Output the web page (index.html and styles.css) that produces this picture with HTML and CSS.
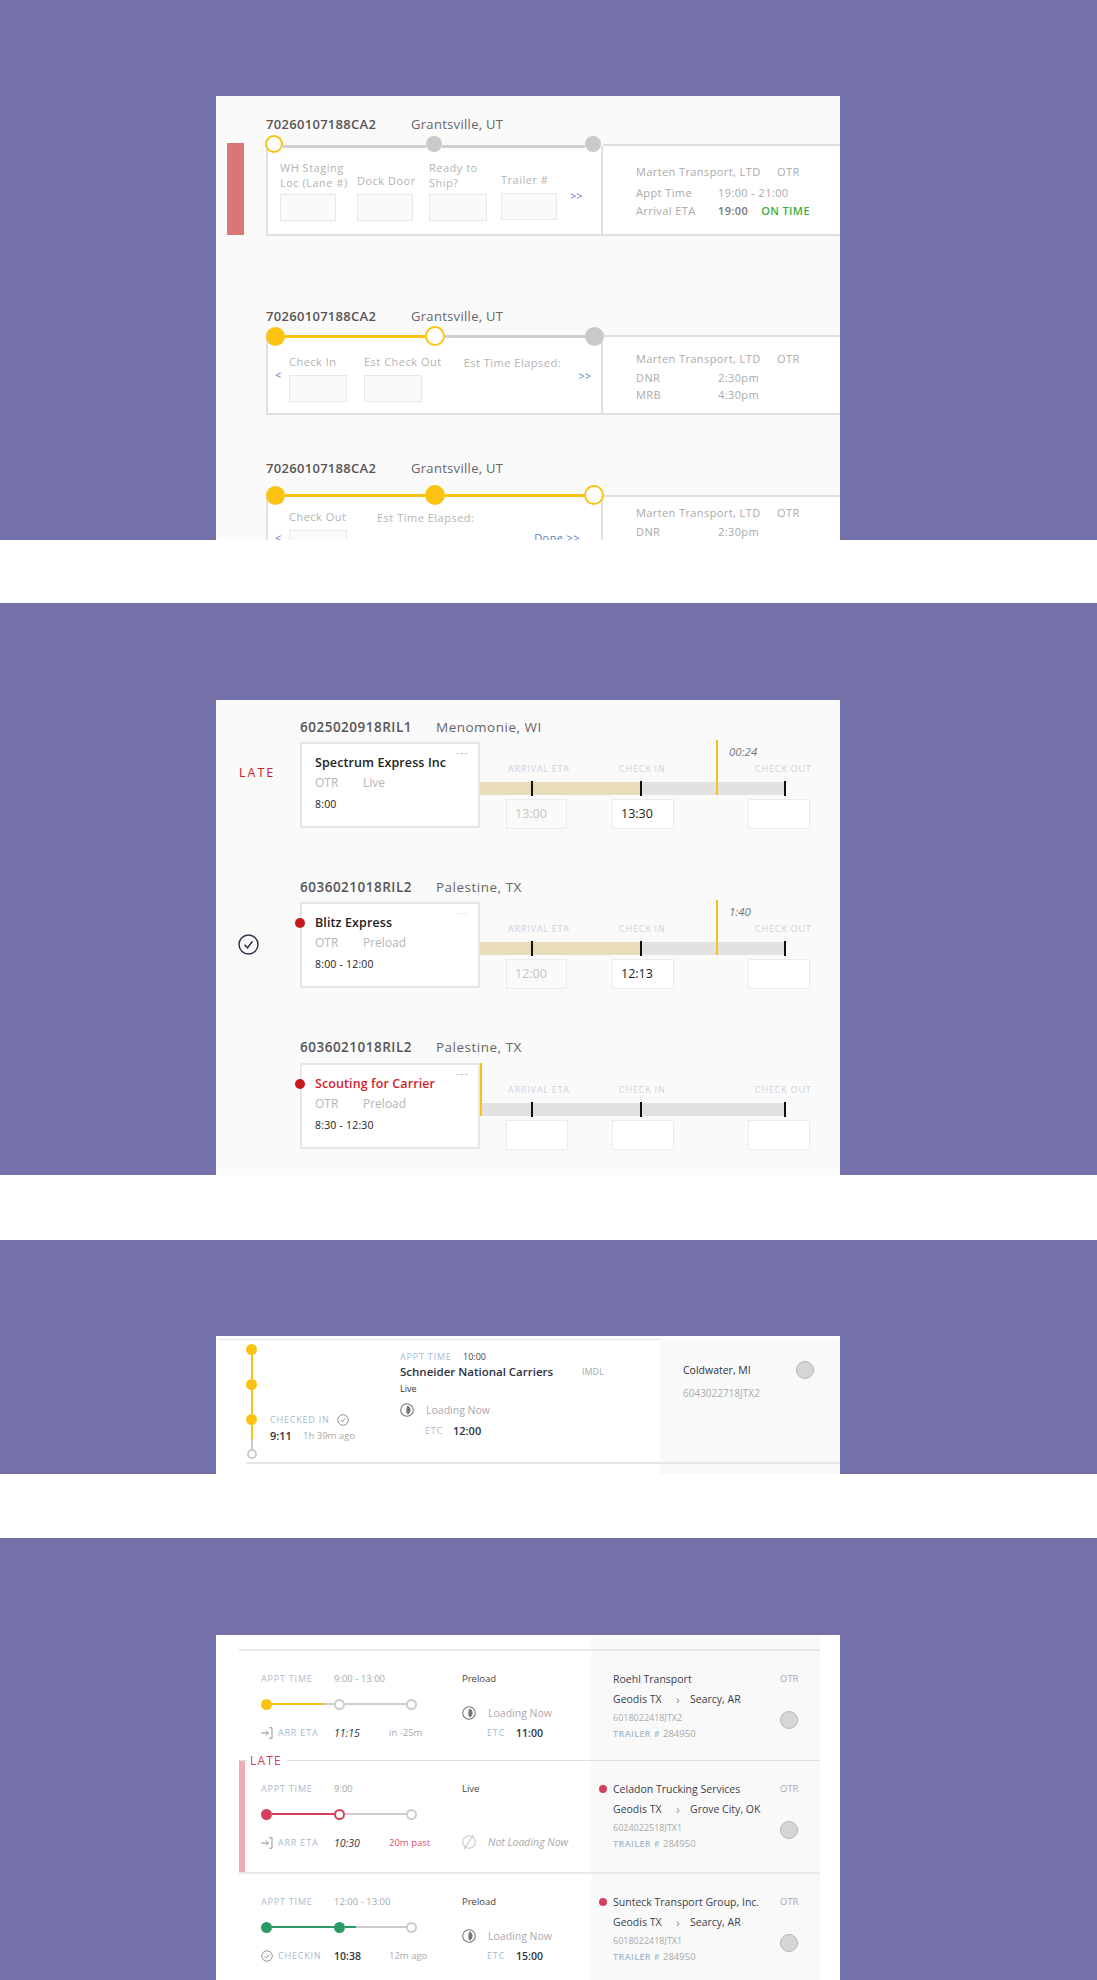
FILE: index.html
```html
<!DOCTYPE html>
<html lang="en">
<head>
    <meta charset="UTF-8">
    <title>Load tracking cards</title>
    <link rel="stylesheet" href="styles.css">
</head>
<body>

    <!-- stepper cards -->
    <section class="band band-1">
        <div class="panel panel-ship">
            <span class="late-block"></span>

            <div class="ship-head"><b>70260107188CA2</b><span>Grantsville, UT</span></div>
            <div class="ship-row">
                <div class="ship-left">
                    <div class="stepper stepper-1">
                        <i class="dot hollow"></i><i class="seg"></i><i class="dot grey small"></i><i class="seg"></i><i class="dot grey small"></i>
                    </div>
                    <div class="box box-1">
                        <div class="field field-wh"><div class="label">WH Staging<br>Loc (Lane #)</div><div class="input"></div></div>
                        <div class="field field-dock"><div class="label single">Dock Door</div><div class="input"></div></div>
                        <div class="field field-ready"><div class="label">Ready to<br>Ship?</div><div class="input wide"></div></div>
                        <div class="field field-trailer"><div class="label single">Trailer #</div><div class="input lift"></div></div>
                        <div class="next next-1">&gt;&gt;</div>
                    </div>
                </div>
                <div class="ship-right right-1">
                    <div class="carrier"><span>Marten Transport, LTD</span><span>OTR</span></div>
                    <div class="kv kv-first"><span>Appt Time</span><span>19:00 - 21:00</span></div>
                    <div class="kv"><span>Arrival ETA</span><span class="dark">19:00</span><span class="ontime">ON TIME</span></div>
                </div>
            </div>

            <div class="ship-head ship-head-2"><b>70260107188CA2</b><span>Grantsville, UT</span></div>
            <div class="ship-row">
                <div class="ship-left">
                    <div class="stepper stepper-2">
                        <i class="dot yellow"></i><i class="seg yellow"></i><i class="dot hollow big"></i><i class="seg"></i><i class="dot grey"></i>
                    </div>
                    <div class="box box-2">
                        <div class="prev prev-2">&lt;</div>
                        <div class="field"><div class="label single">Check In</div><div class="input wide"></div></div>
                        <div class="field field-gap"><div class="label single">Est Check Out</div><div class="input wide"></div></div>
                        <div class="label elapsed elapsed-2">Est Time Elapsed:</div>
                        <div class="next next-2">&gt;&gt;</div>
                    </div>
                </div>
                <div class="ship-right right-2">
                    <div class="carrier"><span>Marten Transport, LTD</span><span>OTR</span></div>
                    <div class="kv kv-near"><span>DNR</span><span>2:30pm</span></div>
                    <div class="kv kv-tight"><span>MRB</span><span>4:30pm</span></div>
                </div>
            </div>

            <div class="ship-head ship-head-3"><b>70260107188CA2</b><span>Grantsville, UT</span></div>
            <div class="ship-row">
                <div class="ship-left">
                    <div class="stepper stepper-3">
                        <i class="dot yellow"></i><i class="seg yellow"></i><i class="dot yellow big"></i><i class="seg yellow"></i><i class="dot hollow big"></i>
                    </div>
                    <div class="box box-3">
                        <div class="prev prev-3">&lt;</div>
                        <div class="field"><div class="label single">Check Out</div><div class="input wide"></div></div>
                        <div class="label elapsed elapsed-3">Est Time Elapsed:</div>
                        <div class="next done">Done &gt;&gt;</div>
                    </div>
                </div>
                <div class="ship-right right-3">
                    <div class="carrier"><span>Marten Transport, LTD</span><span>OTR</span></div>
                    <div class="kv kv-near"><span>DNR</span><span>2:30pm</span></div>
                </div>
            </div>
        </div>
    </section>

    <!-- timeline cards -->
    <section class="band band-2">
        <div class="panel panel-load">

            <div class="load-head"><b>6025020918RIL1</b><span>Menomonie, WI</span></div>
            <div class="load-row">
                <div class="flag"><span class="flag-late">LATE</span></div>
                <div class="load-card">
                    <span class="more">---</span>
                    <div class="load-name">Spectrum Express Inc</div>
                    <div class="load-meta"><span>OTR</span><span>Live</span></div>
                    <div class="load-time">8:00</div>
                </div>
                <div class="timeline">
                    <span class="marker"></span><span class="marker-time">00:24</span>
                    <div class="tl-labels"><span>ARRIVAL ETA</span><span>CHECK IN</span><span>CHECK OUT</span></div>
                    <div class="track"><span class="fill"></span><i class="tick t1"></i><i class="tick t2"></i><i class="tick t3"></i></div>
                    <div class="tl-inputs"><div class="time faded">13:00</div><div class="time">13:30</div><div class="time"></div></div>
                </div>
            </div>

            <div class="load-head"><b>6036021018RIL2</b><span>Palestine, TX</span></div>
            <div class="load-row">
                <div class="flag flag-done">
                    <svg width="21" height="21" viewBox="0 0 21 21" fill="none" stroke="#2f3448" stroke-width="1.5"><circle cx="10.5" cy="10.5" r="9.5"/><path d="M6.5 10.8l3 3 5-6.5"/></svg>
                </div>
                <div class="load-card">
                    <i class="alert"></i>
                    <span class="more pale">---</span>
                    <div class="load-name">Blitz Express</div>
                    <div class="load-meta"><span>OTR</span><span>Preload</span></div>
                    <div class="load-time">8:00 - 12:00</div>
                </div>
                <div class="timeline">
                    <span class="marker"></span><span class="marker-time">1:40</span>
                    <div class="tl-labels"><span>ARRIVAL ETA</span><span>CHECK IN</span><span>CHECK OUT</span></div>
                    <div class="track"><span class="fill"></span><i class="tick t1"></i><i class="tick t2"></i><i class="tick t3"></i></div>
                    <div class="tl-inputs"><div class="time faded">12:00</div><div class="time">12:13</div><div class="time"></div></div>
                </div>
            </div>

            <div class="load-head load-head-last"><b>6036021018RIL2</b><span>Palestine, TX</span></div>
            <div class="load-row">
                <div class="flag"></div>
                <div class="load-card">
                    <i class="alert"></i>
                    <span class="more">---</span>
                    <div class="load-name red">Scouting for Carrier</div>
                    <div class="load-meta"><span>OTR</span><span>Preload</span></div>
                    <div class="load-time">8:30 - 12:30</div>
                </div>
                <div class="timeline">
                    <span class="marker marker-start"></span>
                    <div class="tl-labels"><span>ARRIVAL ETA</span><span>CHECK IN</span><span>CHECK OUT</span></div>
                    <div class="track"><i class="tick t1"></i><i class="tick t2"></i><i class="tick t3"></i></div>
                    <div class="tl-inputs"><div class="time"></div><div class="time"></div><div class="time"></div></div>
                </div>
            </div>
        </div>
    </section>

    <!-- single checked in row -->
    <section class="band band-3">
        <div class="panel panel-checkin">
            <div class="checkin">
                <div class="checkin-left">
                    <div class="v-steps">
                        <i class="v-dot"></i><i class="v-seg"></i><i class="v-dot"></i><i class="v-seg"></i><i class="v-dot"></i><i class="v-seg v-seg-last"></i><i class="v-dot open"></i>
                    </div>
                    <div class="checked">
                        <div class="caps checked-title">CHECKED IN
                            <svg width="12" height="12" viewBox="0 0 12 12" fill="none" stroke="#888" stroke-width=".9"><circle cx="6" cy="6" r="5.3"/><path d="M3.6 6.2l1.7 1.7 3-3.6"/></svg>
                        </div>
                        <div class="checked-time"><b>9:11</b><span>1h 39m ago</span></div>
                    </div>
                    <div class="checkin-info">
                        <div class="appt-line"><span class="caps">APPT TIME</span><span class="appt-value">10:00</span></div>
                        <div class="carrier-line"><span class="carrier-name">Schneider National Carriers</span><span class="mode">IMDL</span></div>
                        <div class="live">Live</div>
                        <div class="loading">
                            <svg class="pie" width="14" height="16" viewBox="0 0 14 16" fill="none" stroke="#777" stroke-width="1.1"><circle cx="7" cy="8" r="6.3"/><path d="M7.500 3.400c2.400.8 3.500 3 3 5.600-.4 1.700-1.400 2.900-2.700 3.500-1.300-1.300-1.800-3-1.500-5 .2-1.600.5-3 1.200-4.100z" fill="#777" stroke="none"/></svg>
                            <span>Loading Now</span>
                        </div>
                        <div class="etc"><span class="caps">ETC</span><b>12:00</b></div>
                    </div>
                </div>
                <div class="checkin-right">
                    <div class="place">
                        <div class="place-name">Coldwater, MI</div>
                        <div class="place-id">6043022718JTX2</div>
                    </div>
                    <i class="status"></i>
                </div>
            </div>
            <div class="checkin-foot"></div>
        </div>
    </section>

    <!-- appointment list -->
    <section class="band band-4">
        <div class="panel panel-appt">
            <div class="appt-list">
                <div class="appt-top"></div>

                <div class="appt">
                    <div class="appt-main">
                        <div class="appt-track">
                            <div class="appt-time"><span class="caps">APPT TIME</span><span>9:00 - 13:00</span></div>
                            <div class="mini"><i class="m-dot m-yellow"></i><i class="m-seg"><span class="m-fill m-yellow part-long"></span></i><i class="m-dot m-open"></i><i class="m-seg"></i><i class="m-dot m-open"></i></div>
                            <div class="appt-eta">
                                <svg width="12" height="12" viewBox="0 0 12 12" fill="none" stroke="#888" stroke-width=".9"><path d="M0 6h7M4.800 3.400L7.400 6 4.800 8.600M8 .8h3v10.400H8"/></svg>
                                <span class="caps eta-label">ARR ETA</span><em>11:15</em><span class="eta-note">in -25m</span>
                            </div>
                        </div>
                        <div class="appt-load">
                            <div class="appt-kind">Preload</div>
                            <div class="loading loading-appt">
                                <svg class="pie" width="14" height="16" viewBox="0 0 14 16" fill="none" stroke="#777" stroke-width="1.1"><circle cx="7" cy="8" r="6.3"/><path d="M7.500 3.400c2.400.8 3.500 3 3 5.600-.4 1.700-1.400 2.900-2.700 3.500-1.300-1.300-1.800-3-1.500-5 .2-1.600.5-3 1.200-4.100z" fill="#777" stroke="none"/></svg>
                                <span>Loading Now</span>
                            </div>
                            <div class="etc etc-appt"><span class="caps">ETC</span><b>11:00</b></div>
                        </div>
                    </div>
                    <div class="appt-side">
                        <div class="side-text">
                            <div class="side-name">Roehl Transport</div>
                            <div class="route"><span>Geodis TX</span><span class="chev">&#8250;</span><span>Searcy, AR</span></div>
                            <div class="side-id">6018022418JTX2</div>
                            <div class="trailer"><span class="caps">TRAILER #</span><span>284950</span></div>
                        </div>
                        <div class="side-end"><span>OTR</span><i class="status"></i></div>
                    </div>
                </div>

                <div class="appt appt-late">
                    <span class="late-bar"></span>
                    <span class="late-tag">LATE</span>
                    <div class="appt-main">
                        <div class="appt-track">
                            <div class="appt-time"><span class="caps">APPT TIME</span><span>9:00</span></div>
                            <div class="mini"><i class="m-dot m-red"></i><i class="m-seg"><span class="m-fill m-red"></span></i><i class="m-dot m-open m-open-red"></i><i class="m-seg"></i><i class="m-dot m-open"></i></div>
                            <div class="appt-eta">
                                <svg width="12" height="12" viewBox="0 0 12 12" fill="none" stroke="#888" stroke-width=".9"><path d="M0 6h7M4.800 3.400L7.400 6 4.800 8.600M8 .8h3v10.400H8"/></svg>
                                <span class="caps eta-label">ARR ETA</span><em>10:30</em><span class="eta-note red-note">20m past</span>
                            </div>
                        </div>
                        <div class="appt-load">
                            <div class="appt-kind">Live</div>
                            <div class="loading loading-none">
                                <svg class="pie" width="14" height="16" viewBox="0 0 14 16" fill="none" stroke="#c8c8c8" stroke-width="1.1"><circle cx="7" cy="8" r="6.300"/><path d="M11.500 .8L2 15.400"/></svg>
                                <em>Not Loading Now</em>
                            </div>
                        </div>
                    </div>
                    <div class="appt-side">
                        <div class="side-text">
                            <div class="side-name"><i class="side-dot"></i>Celadon Trucking Services</div>
                            <div class="route"><span>Geodis TX</span><span class="chev">&#8250;</span><span>Grove City, OK</span></div>
                            <div class="side-id">6024022518JTX1</div>
                            <div class="trailer"><span class="caps">TRAILER #</span><span>284950</span></div>
                        </div>
                        <div class="side-end"><span>OTR</span><i class="status"></i></div>
                    </div>
                </div>

                <div class="appt appt-next">
                    <div class="appt-main">
                        <div class="appt-track">
                            <div class="appt-time"><span class="caps">APPT TIME</span><span>12:00 - 13:00</span></div>
                            <div class="mini"><i class="m-dot m-green"></i><i class="m-seg"><span class="m-fill m-green"></span></i><i class="m-dot m-green"></i><i class="m-seg"><span class="m-fill m-green part-short"></span></i><i class="m-dot m-open"></i></div>
                            <div class="appt-eta">
                                <svg width="12" height="12" viewBox="0 0 12 12" fill="none" stroke="#888" stroke-width=".9"><circle cx="6" cy="6" r="5.300"/><path d="M3.600 6.200l1.700 1.700 3-3.600"/></svg>
                                <span class="caps eta-label">CHECKIN</span><b>10:38</b><span class="eta-note">12m ago</span>
                            </div>
                        </div>
                        <div class="appt-load">
                            <div class="appt-kind">Preload</div>
                            <div class="loading loading-appt">
                                <svg class="pie" width="14" height="16" viewBox="0 0 14 16" fill="none" stroke="#777" stroke-width="1.1"><circle cx="7" cy="8" r="6.3"/><path d="M7.500 3.400c2.400.8 3.500 3 3 5.600-.4 1.700-1.400 2.900-2.700 3.500-1.300-1.300-1.800-3-1.500-5 .2-1.600.5-3 1.200-4.100z" fill="#777" stroke="none"/></svg>
                                <span>Loading Now</span>
                            </div>
                            <div class="etc etc-appt"><span class="caps">ETC</span><b>15:00</b></div>
                        </div>
                    </div>
                    <div class="appt-side">
                        <div class="side-text">
                            <div class="side-name"><i class="side-dot"></i>Sunteck Transport Group, Inc.</div>
                            <div class="route"><span>Geodis TX</span><span class="chev">&#8250;</span><span>Searcy, AR</span></div>
                            <div class="side-id">6018022418JTX1</div>
                            <div class="trailer"><span class="caps">TRAILER #</span><span>284950</span></div>
                        </div>
                        <div class="side-end"><span>OTR</span><i class="status"></i></div>
                    </div>
                </div>
            </div>
        </div>
    </section>

</body>
</html>
```

FILE: styles.css
```css
* {
    box-sizing: border-box;
}
body {
    margin: 0;
    background: #fff;
    font-family: "Open Sans", "Liberation Sans", sans-serif;
    font-size: 11px;
    color: #555;
}
i, em {
    display: block;
}
em {
    font-style: italic;
}

/* purple bands */
.band {
    background: #7470aa;
    padding-left: 216px;
}
.band-1 {
    height: 540px;
    padding-top: 96px;
    margin-bottom: 63px;
}
.band-2 {
    height: 572px;
    padding-top: 97px;
    margin-bottom: 65px;
}
.band-3 {
    height: 234px;
    padding-top: 96px;
    margin-bottom: 64px;
}
.band-4 {
    height: 442px;
    padding-top: 97px;
}
.panel {
    position: relative;
    width: 624px;
    height: 100%;
    overflow: hidden;
    background: #fafafa;
}

/* ---------- panel 1 ---------- */
.panel-ship { padding-top: 19px; }
.late-block {
    position: absolute;
    left: 11px;
    top: 47px;
    width: 17px;
    height: 92px;
    background: #d97777;
}
.ship-head {
    display: flex;
    height: 18px;
    margin-left: 50px;
    font-size: 13px;
    line-height: 18px;
    letter-spacing: .3px;
    color: #666;
}
.ship-head b {
    width: 145px;
    font-weight: 600;
    color: #555;
}
.ship-head-2 { margin-top: 71px; }
.ship-head-3 { margin-top: 44px; }
.ship-row {
    display: flex;
    margin-left: 50px;
}
.ship-left {
    width: 337px;
    flex: none;
}
.stepper {
    position: relative;
    z-index: 1;
    display: flex;
    align-items: center;
}
.stepper-1 { margin: 2px 2px 0 -1px; height: 18px; }
.stepper-2 { margin: 1px -1px 0 0; height: 20px; }
.stepper-3 { margin: 7px -1px 0 0; height: 22px; }
.dot {
    flex: none;
    width: 19px;
    height: 19px;
    border-radius: 50%;
}
.dot.big { width: 20px; height: 20px; }
.dot.small { width: 16px; height: 16px; }
.dot.hollow {
    background: #fff;
    border: 2px solid #fac312;
}
.stepper-1 .dot.hollow { width: 18px; height: 18px; }
.dot.yellow { background: #fac312; }
.dot.grey { background: #c9c9c9; }
.seg {
    flex: 1;
    height: 3px;
    background: #cfcfcf;
}
.stepper-1 .seg { position: relative; top: 2px; }
.seg.yellow { background: #fac312; }
.box {
    display: flex;
    background: #fff;
    border: 2px solid #e0e0e0;
    border-top: 0;
}
.box-1 {
    height: 90px;
    margin-top: -7px;
    align-items: flex-end;
    padding: 0 0 13px 12px;
}
.box-2 {
    height: 79px;
    margin-top: -10px;
    align-items: flex-start;
    padding: 18px 10px 0 7px;
}
.box-3 {
    height: 120px;
    margin-top: -11px;
    align-items: flex-start;
    padding: 14px 10px 0 7px;
}
.field-wh { width: 77px; }
.field-dock { width: 72px; }
.field-ready { width: 72px; }
.field-trailer { width: 69px; }
.field-gap { margin-left: 17px; }
.label {
    font-size: 11px;
    line-height: 15px;
    letter-spacing: .5px;
    color: #b3b3b3;
    white-space: nowrap;
    margin-bottom: 4px;
}
.label.single {
    margin-bottom: 6px;
}
.input {
    width: 56px;
    height: 27px;
    background: #fafafa;
    border: 1px solid #e8e8e8;
}
.input.wide { width: 58px; }
.input.lift { margin-bottom: 1px; }
.next, .prev {
    font-size: 11px;
    line-height: 14px;
    color: #5d7cc0;
}
.next-1 { margin: 0 0 18px 0; }
.next-2 { margin: 15px 0 0 auto; }
.done { margin: 22px 11px 0 auto; letter-spacing: .4px; white-space: nowrap; }
.prev { width: 14px; flex: none; }
.prev-2 { margin-top: 14px; }
.prev-3 { margin-top: 22px; }
.elapsed { margin-top: 1px; }
.elapsed-2 { margin-left: 22px; }
.elapsed-3 { margin-left: 30px; }
.ship-right {
    flex: 1;
    background: #fff;
    border-top: 2px solid #e0e0e0;
    border-bottom: 2px solid #e0e0e0;
    padding-left: 33px;
    font-size: 11px;
    line-height: 18px;
    letter-spacing: .4px;
    color: #aaa;
}
.right-1 { margin-top: 11px; height: 92px; padding-top: 17px; }
.right-2 { margin-top: 10px; height: 80px; padding-top: 13px; }
.right-3 { margin-top: 18px; height: 120px; padding-top: 7px; }
.carrier { display: flex; }
.carrier span:first-child { width: 141px; }
.kv { display: flex; }
.kv span:first-child { width: 82px; }
.kv-first { margin-top: 3px; }
.kv-near { margin-top: 1px; }
.kv-tight { margin-top: -1px; }
.dark { color: #777; font-weight: 600; }
.ontime {
    margin-left: 13px;
    color: #41ad41;
    font-weight: 600;
}

/* ---------- panel 2 ---------- */
.panel-load { padding-top: 18px; }
.load-head {
    display: flex;
    margin-left: 84px;
    font-size: 13.5px;
    line-height: 18px;
    letter-spacing: .5px;
    color: #666;
}
.load-head b {
    width: 136px;
    font-weight: 600;
    color: #555;
}
.load-head + .load-row { margin-top: 6px; }
.load-head-last + .load-row { margin-top: 7px; }
.load-row {
    display: flex;
    height: 86px;
    margin-bottom: 50px;
}
.flag {
    width: 84px;
    flex: none;
    padding: 22px 0 0 23px;
}
.flag-late {
    font-size: 12.500px;
    line-height: 18px;
    letter-spacing: 2px;
    color: #c9242c;
}
.flag-done { padding-top: 32px; padding-left: 22px; }
.load-card {
    position: relative;
    width: 180px;
    height: 86px;
    flex: none;
    background: #fff;
    border: 2px solid #e6e6e6;
    padding: 10px 0 0 13px;
}
.more {
    position: absolute;
    right: 9px;
    top: 1px;
    font-size: 11px;
    line-height: 14px;
    letter-spacing: 1px;
    color: #bbb;
}
.more.pale { color: #e4e4e4; }
.alert {
    position: absolute;
    left: -7px;
    top: 14px;
    width: 10px;
    height: 10px;
    border-radius: 50%;
    background: #c9191e;
}
.load-name {
    font-size: 12.500px;
    line-height: 18px;
    letter-spacing: .1px;
    font-weight: 600;
    color: #222;
}
.load-name.red { color: #d3222a; }
.load-meta {
    display: flex;
    margin-top: 2px;
    font-size: 12px;
    line-height: 18px;
    color: #b5b5b5;
}
.load-meta span:first-child { width: 48px; }
.load-time {
    margin-top: 3px;
    font-size: 10.500px;
    line-height: 18px;
    letter-spacing: .2px;
    color: #222;
}
.timeline {
    position: relative;
    flex: 1;
    padding-top: 21px;
}
.tl-labels {
    display: grid;
    grid-template-columns: 106px 136px 62px;
    margin-left: 26px;
    font-size: 9px;
    line-height: 12px;
    letter-spacing: .8px;
    color: #ccd2dc;
    white-space: nowrap;
}
.tl-labels span:first-child { margin-left: 2px; }
.tl-labels span:nth-child(2) { margin-left: 7px; }
.tl-labels span:nth-child(3) { margin-left: 7px; }
.track {
    position: relative;
    width: 306px;
    height: 13px;
    margin-top: 7px;
    background: #e2e2e2;
}
.fill {
    position: absolute;
    left: 0;
    top: 0;
    bottom: 0;
    width: 161px;
    background: #e8dcbb;
}
.tick {
    position: absolute;
    top: -1px;
    width: 2px;
    height: 15px;
    background: #111;
}
.t1 { left: 51px; }
.t2 { left: 160px; }
.t3 { left: 304px; }
.marker {
    position: absolute;
    left: 236px;
    top: -2px;
    width: 2px;
    height: 55px;
    background: #fac312;
    z-index: 1;
}
.marker-start { left: 0; top: 0; height: 53px; }
.marker-time {
    position: absolute;
    left: 249px;
    top: 1px;
    font-size: 11.500px;
    line-height: 18px;
    font-style: italic;
    color: #777;
}
.tl-inputs {
    display: grid;
    grid-template-columns: 106px 136px 62px;
    margin: 4px 0 0 26px;
}
.time {
    width: 62px;
    height: 30px;
    padding: 0 8px;
    background: #fff;
    border: 1px solid #ececec;
    font-size: 12.500px;
    line-height: 28px;
    color: #222;
}
.time.faded {
    width: 61px;
    background: #fafafa;
    color: #c4c4c4;
}

/* ---------- panel 3 ---------- */
.panel-checkin {
    padding-top: 3px;
    background: #fff;
}
.checkin {
    display: flex;
    height: 125px;
    border-bottom: 2px solid #e5e5e5;
    margin-left: 30px;
}
.checkin-left {
    display: flex;
    width: 442px;
    flex: none;
    border-top: 1px solid #e8e5dd;
    margin-left: -28px;
    padding-left: 28px;
}
.v-steps {
    display: flex;
    flex-direction: column;
    align-items: center;
    width: 11px;
    flex: none;
    padding-top: 4px;
}
.v-dot {
    flex: none;
    width: 11px;
    height: 11px;
    border-radius: 50%;
    background: #fac312;
}
.v-dot.open {
    width: 10px;
    height: 10px;
    background: #fff;
    border: 2px solid #ccc;
}
.v-seg {
    flex: none;
    width: 2px;
    height: 24px;
    background: #fac312;
}
.v-seg-last {
    background: linear-gradient(#fac312 60%, #ccc 60%);
}
.caps {
    font-size: 9px;
    line-height: 14px;
    letter-spacing: .8px;
    color: #a7bbcf;
}
.checked {
    width: 143px;
    flex: none;
    padding: 73px 0 0 13px;
}
.checked-title {
    display: flex;
    align-items: center;
    gap: 7px;
    white-space: nowrap;
}
.checked-time {
    display: flex;
    margin-top: 2px;
    line-height: 14px;
}
.checked-time b {
    width: 33px;
    font-weight: 600;
    color: #333;
}
.checked-time span {
    font-size: 9.500px;
    color: #aaa;
}
.checkin-info {
    flex: 1;
    padding-top: 11px;
}
.appt-line {
    display: flex;
    line-height: 12px;
}
.appt-line .caps { width: 63px; line-height: 12px; }
.appt-value {
    font-size: 9px;
    color: #444;
}
.carrier-line {
    display: flex;
    align-items: center;
    margin-top: 1px;
    line-height: 16px;
}
.carrier-name {
    width: 182px;
    font-size: 11.500px;
    font-weight: 600;
    color: #2e3142;
}
.mode {
    font-size: 9px;
    color: #aaa;
}
.live {
    margin-top: 3px;
    font-size: 9px;
    line-height: 12px;
    color: #333;
}
.loading {
    display: flex;
    align-items: center;
    margin-top: 7px;
    font-size: 10.500px;
    line-height: 16px;
    color: #aaa;
}
.loading .pie {
    width: 14px;
    margin-right: 12px;
    flex: none;
}
.etc {
    display: flex;
    align-items: center;
    margin: 6px 0 0 25px;
    line-height: 14px;
}
.etc .caps { width: 28px; }
.etc b {
    font-weight: 600;
    color: #2e3142;
}
.checkin-right {
    flex: 1;
    display: flex;
    background: #f9f9f9;
    padding: 22px 26px 0 23px;
}
.place { flex: 1; }
.place-name {
    font-size: 10.500px;
    line-height: 18px;
    color: #333;
}
.place-id {
    margin-top: 7px;
    font-size: 10px;
    line-height: 14px;
    color: #aaa;
}
.status {
    flex: none;
    width: 18px;
    height: 18px;
    border-radius: 50%;
    background: #d6d6d6;
    border: 1px solid #b5b5b5;
}
.checkin-foot {
    height: 10px;
    margin-left: 444px;
    background: #f9f9f9;
}

/* ---------- panel 4 ---------- */
.panel-appt { background: #fff; }
.appt-list {
    width: 581px;
    margin-left: 23px;
}
.appt-top {
    height: 14px;
    margin-left: 352px;
    background: #f9f9f9;
}
.appt {
    position: relative;
    display: flex;
    height: 111px;
    border-top: 2px solid #e9e9e9;
}
.appt-late {
    height: 112px;
    border-top-width: 1px;
    border-top-color: #ddd;
}
.appt-next { height: 130px; }
.appt-main {
    display: flex;
    width: 352px;
    flex: none;
    padding-left: 22px;
}
.late-bar {
    position: absolute;
    left: 0;
    top: 0;
    bottom: 0;
    width: 6px;
    background: #eeacb4;
}
.late-tag {
    position: absolute;
    left: 8px;
    top: -9px;
    padding: 0 5px 0 3px;
    background: #fff;
    font-size: 12px;
    line-height: 17px;
    letter-spacing: 1.200px;
    color: #d4405c;
}
.appt-track {
    width: 201px;
    flex: none;
    padding-top: 21px;
}
.appt-time {
    display: flex;
    font-size: 9.500px;
    line-height: 14px;
    color: #aaa;
}
.appt-time .caps { width: 73px; }
.mini {
    display: flex;
    align-items: center;
    width: 156px;
    height: 14px;
    margin-top: 11px;
}
.m-dot {
    flex: none;
    width: 11px;
    height: 11px;
    border-radius: 50%;
}
.m-open {
    background: #fff;
    border: 2px solid #ccc;
}
.m-open-red { border-color: #d4405c; }
.m-yellow { background: #fac312; }
.m-red { background: #d4405c; }
.m-green { background: #2a9a68; }
.m-seg {
    position: relative;
    flex: 1;
    height: 2px;
    background: #ccc;
}
.m-fill {
    position: absolute;
    left: 0;
    top: 0;
    bottom: 0;
    width: 100%;
}
.part-long { width: 84%; }
.part-short { width: 19%; }
.appt-eta {
    display: flex;
    align-items: center;
    margin-top: 15px;
    font-size: 10.500px;
    line-height: 14px;
}
.appt-eta svg {
    flex: none;
    margin-right: 5px;
}
.eta-label { width: 56px; }
.appt-eta em, .appt-eta b {
    width: 55px;
    color: #333;
}
.appt-eta b { font-weight: 600; }
.eta-note {
    font-size: 9.500px;
    color: #aaa;
}
.red-note { color: #e0506a; }
.appt-load {
    flex: 1;
    padding-top: 21px;
}
.appt-kind {
    font-size: 9.500px;
    line-height: 14px;
    color: #444;
}
.loading-appt { margin-top: 19px; }
.loading-none { margin-top: 38px; }
.etc-appt { margin-top: 5px; font-size: 10.500px; }
.etc-appt .caps { width: 29px; }
.appt-side {
    display: flex;
    flex: 1;
    background: #f9f9f9;
    padding: 20px 0 0 22px;
}
.side-text { width: 167px; flex: none; }
.side-name {
    position: relative;
    font-size: 10.500px;
    line-height: 16px;
    color: #3a3d4e;
    white-space: nowrap;
}
.side-dot {
    position: absolute;
    left: -14px;
    top: 4px;
    width: 8px;
    height: 8px;
    border-radius: 50%;
    background: #d4405c;
}
.route {
    display: flex;
    margin-top: 4px;
    font-size: 10.500px;
    line-height: 16px;
    color: #3a3d4e;
}
.route span:first-child { width: 63px; }
.chev { width: 14px; font-size: 13px; color: #999; }
.side-id {
    margin-top: 5px;
    font-size: 9px;
    line-height: 12px;
    color: #aaa;
}
.trailer {
    display: flex;
    align-items: center;
    margin-top: 3px;
    font-size: 9.500px;
    line-height: 14px;
    color: #aaa;
    white-space: nowrap;
}
.trailer .caps { width: 50px; font-weight: 600; letter-spacing: .4px; }
.side-end {
    display: flex;
    flex-direction: column;
    font-size: 9.500px;
    line-height: 16px;
    color: #aaa;
}
.side-end .status { margin-top: 24px; }
```
